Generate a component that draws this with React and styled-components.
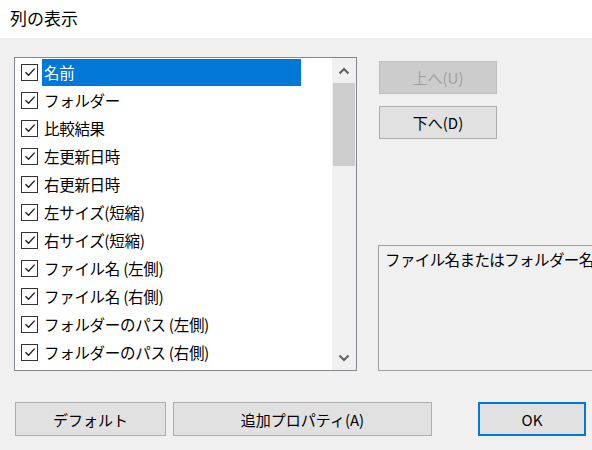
import React from 'react'
import styled, { createGlobalStyle } from 'styled-components'

const GlobalStyle = createGlobalStyle`
    html, body {
        margin: 0;
        padding: 0;
        background: #f0f0f0;
    }
    body {
        font-family: "Noto Sans CJK JP", "Noto Sans", sans-serif;
        color: #000;
    }
`

const columns = [
    '名前',
    'フォルダー',
    '比較結果',
    '左更新日時',
    '右更新日時',
    '左サイズ(短縮)',
    '右サイズ(短縮)',
    'ファイル名 (左側)',
    'ファイル名 (右側)',
    'フォルダーのパス (左側)',
    'フォルダーのパス (右側)',
]

function CheckMark() {
    return (
        <svg width="12" height="12" viewBox="0 0 12 12">
            <path d="M1.5 6.2 L4.6 9.2 L10.6 2.6" fill="none" stroke="#222" strokeWidth="1.4" />
        </svg>
    )
}

function Chevron({ down }) {
    return (
        <svg width="12" height="8" viewBox="0 0 12 8">
            <path
                d={down ? 'M1.5 1.5 L6 6 L10.5 1.5' : 'M1.5 6.5 L6 2 L10.5 6.5'}
                fill="none"
                stroke="#606060"
                strokeWidth="2"
            />
        </svg>
    )
}

function App() {
    return (
        <Window>
            <GlobalStyle />
            <TitleBar>列の表示</TitleBar>

            <Body>
                <MainRow>
                    <ListBox>
                        <Items>
                            { columns.map((name, i) => (
                                <Row key={name}>
                                    <Box><CheckMark /></Box>
                                    <Label selected={i === 0}>{ name }</Label>
                                </Row>
                            ))}
                        </Items>
                        <ScrollBar>
                            <Arrow><Chevron /></Arrow>
                            <Thumb />
                            <Track />
                            <Arrow><Chevron down /></Arrow>
                        </ScrollBar>
                    </ListBox>

                    <SideColumn>
                        <Button disabled>上へ(U)</Button>
                        <Button>下へ(D)</Button>
                        <Spacer />
                        <Description>ファイル名またはフォルダー名で</Description>
                    </SideColumn>
                </MainRow>

                <Footer>
                    <Button width={151} height={34}>デフォルト</Button>
                    <Button width={259} height={34}>追加プロパティ(A)</Button>
                    <Gap />
                    <Button width={108} height={34} primary>OK</Button>
                </Footer>
            </Body>
        </Window>
    )
}

export default App

const Window = styled.div`
    width: 592px;
    height: 450px;
    overflow: hidden;
    background: #f0f0f0;
`

const TitleBar = styled.div`
    height: 38px;
    background: #fff;
    font-size: 17px;
    line-height: 36px;
    padding-left: 10px;
    box-sizing: border-box;
`

const Body = styled.div`
    padding: 19px 0 0 14px;
`

const MainRow = styled.div`
    display: flex;
    gap: 21px;
`

const ListBox = styled.div`
    width: 343px;
    height: 314px;
    flex-shrink: 0;
    box-sizing: border-box;
    border: 1px solid #828790;
    background: #fff;
    display: flex;
`

const Items = styled.div`
    flex: 1;
    overflow: hidden;
`

const Row = styled.div`
    height: 28px;
    display: flex;
    align-items: center;
    padding-left: 6px;
    font-size: 15.5px;
    letter-spacing: -0.3px;
`

const Box = styled.div`
    width: 17px;
    height: 17px;
    box-sizing: border-box;
    border: 1.5px solid #333;
    display: flex;
    align-items: center;
    justify-content: center;
    margin-right: 4px;
    flex-shrink: 0;
`

const Label = styled.div`
    height: 27px;
    margin-top: 1px;
    line-height: 26px;
    padding-left: 2px;
    white-space: nowrap;
    width: ${props => props.selected ? '257px' : 'auto'};
    background: ${props => props.selected ? '#0078d7' : 'transparent'};
    color: ${props => props.selected ? '#fff' : '#000'};
`

const ScrollBar = styled.div`
    width: 24px;
    background: #f0f0f0;
    display: flex;
    flex-direction: column;
`

const Arrow = styled.div`
    height: 25px;
    display: flex;
    align-items: center;
    justify-content: center;
`

const Thumb = styled.div`
    height: 83px;
    margin: 0 1px;
    background: #cdcdcd;
`

const Track = styled.div`
    flex: 1;
`

const SideColumn = styled.div`
    display: flex;
    flex-direction: column;
    gap: 12px;
    padding-top: 4px;
    flex-shrink: 0;
    width: 260px;
`

const Spacer = styled.div`
    height: 90px;
`

const Button = styled.div`
    width: ${props => props.width || 118}px;
    height: ${props => props.height || 33}px;
    box-sizing: border-box;
    margin-left: 1px;
    display: flex;
    align-items: center;
    justify-content: center;
    font-size: 15px;
    flex-shrink: 0;
    background: ${props => props.disabled ? '#cccccc' : '#e1e1e1'};
    color: ${props => props.disabled ? '#a0a0a0' : '#000'};
    border: ${props => props.primary ? '2px solid #0078d7' : `1px solid ${props.disabled ? '#bfbfbf' : '#adadad'}`};
`

const Description = styled.div`
    width: 260px;
    height: 126px;
    box-sizing: border-box;
    border: 1px solid #a0a0a0;
    border-right: none;
    padding: 2px 0 0 6px;
    font-size: 15.5px;
    letter-spacing: -0.6px;
    white-space: nowrap;
    overflow: hidden;
    margin-top: -8px;
`

const Footer = styled.div`
    display: flex;
    align-items: center;
    margin-top: 31px;
    gap: 6px;
`

const Gap = styled.div`
    width: 33px;
`
